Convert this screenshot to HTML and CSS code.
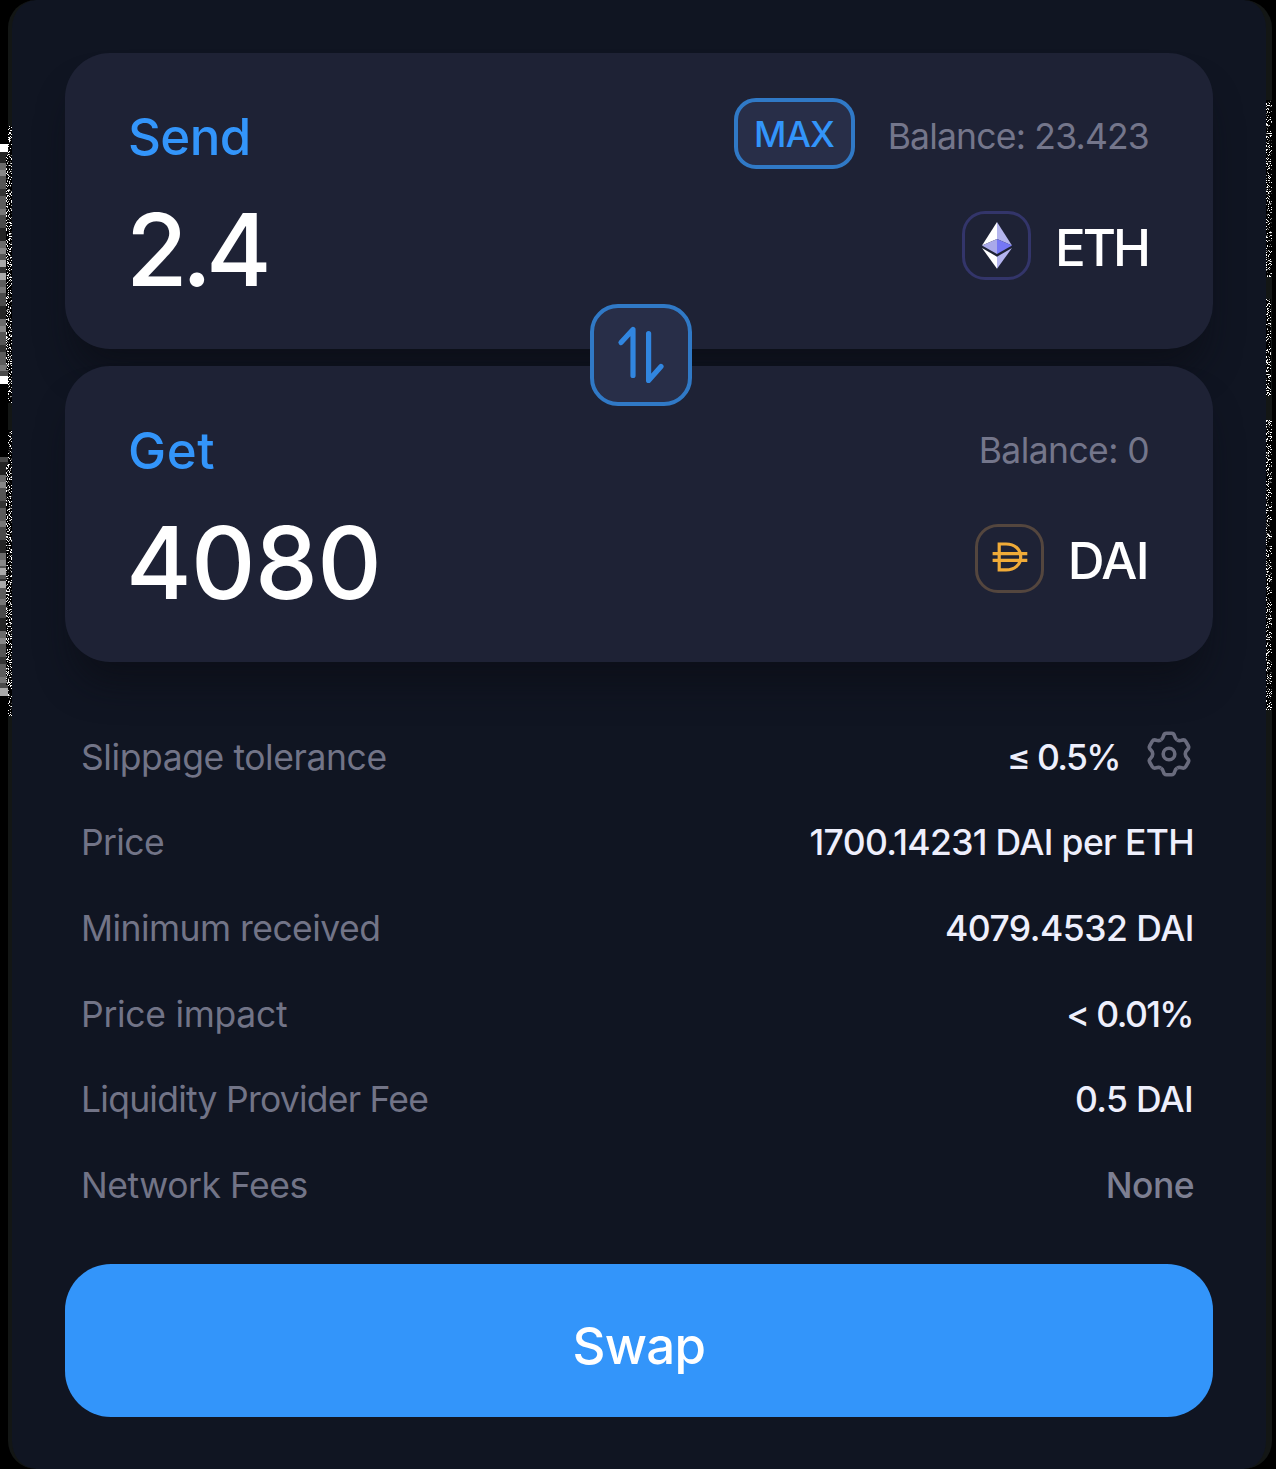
FILE: index.html
```html
<!DOCTYPE html>
<html lang="en">
<head>
<meta charset="utf-8">
<title>Swap</title>
<link rel="stylesheet" href="styles.css">
</head>
<body>
<main class="panel">
  <div class="cards">
    <section class="card">
      <div class="card-head">
        <h2 class="card-title">Send</h2>
        <div class="card-meta">
          <button class="max" type="button">MAX</button>
          <span class="balance">Balance: 23.423</span>
        </div>
      </div>
      <div class="card-body">
        <span class="amount amount-decimal">2.4</span>
        <div class="token">
          <span class="token-icon token-icon-eth">
            <svg class="eth" viewBox="0 0 30 47" aria-hidden="true">
              <path fill="#fff" d="M15 0 0 23.6 15 17Z"/>
              <path fill="#b4b5ee" d="M15 0 30 23.6 15 17Z"/>
              <path fill="#a9a9ea" d="M0 23.6 15 17V32Z"/>
              <path fill="#7577f5" d="M30 23.6 15 17V32Z"/>
              <path fill="#fff" d="M0 26 15 34.7V46.8Z"/>
              <path fill="#b4b5f0" d="M30 26 15 34.7V46.8Z"/>
            </svg>
          </span>
          <span class="token-name token-name-eth">ETH</span>
        </div>
      </div>
    </section>

    <section class="card">
      <div class="card-head">
        <h2 class="card-title card-title-get">Get</h2>
        <div class="card-meta">
          <span class="balance balance-zero">Balance: 0</span>
        </div>
      </div>
      <div class="card-body">
        <span class="amount">4080</span>
        <div class="token">
          <span class="token-icon token-icon-dai">
            <svg class="dai" viewBox="0 0 36 30" aria-hidden="true">
              <path d="M7.2 2H14C22.500 2 28.700 7 28.700 14.900S22.500 27.900 14 27.900H7.200ZM.6 11.700H35.300M.6 18.400H35.300"/>
            </svg>
          </span>
          <span class="token-name token-name-dai">DAI</span>
        </div>
      </div>
    </section>

    <button class="flip" type="button" aria-label="Switch tokens">
      <svg viewBox="0 0 102 102" aria-hidden="true">
        <path d="M31 38.500 43 25.500V71.500M58.600 29.500V76.500L71 62.500"/>
      </svg>
    </button>
  </div>

  <dl class="details">
    <div class="row">
      <dt class="t-slip">Slippage tolerance</dt>
      <dd class="with-gear">
        <span class="t-percent">≤ 0.5%</span>
        <svg class="gear" viewBox="-23 -23 46 46" aria-hidden="true">
          <defs><path id="tooth" d="M-8.100-14.100C-6.500-15-6-16-5.600-17.800C-5.200-20-4-20.800-2.500-20.800H2.500C4-20.800 5.200-20 5.600-17.800C6-16 6.500-15 8.100-14.100"/></defs>
          <use href="#tooth"/>
          <use href="#tooth" transform="rotate(60)"/>
          <use href="#tooth" transform="rotate(120)"/>
          <use href="#tooth" transform="rotate(180)"/>
          <use href="#tooth" transform="rotate(240)"/>
          <use href="#tooth" transform="rotate(300)"/>
          <circle r="5.800"/>
        </svg>
      </dd>
    </div>
    <div class="row"><dt class="t-price">Price</dt><dd class="t-rate">1700.14231 DAI per ETH</dd></div>
    <div class="row"><dt class="t-minimum">Minimum received</dt><dd class="t-received">4079.4532 DAI</dd></div>
    <div class="row"><dt class="t-impact">Price impact</dt><dd class="t-percent t-percent-end">&lt; 0.01%</dd></div>
    <div class="row"><dt class="t-provider">Liquidity Provider Fee</dt><dd class="t-fee">0.5 DAI</dd></div>
    <div class="row"><dt class="t-network">Network Fees</dt><dd class="none">None</dd></div>
  </dl>

  <button class="swap" type="button">Swap</button>
</main>

<svg class="edges" viewBox="0 0 1276 1469" aria-hidden="true">
  <defs>
    <filter id="grain" x="0" y="0" width="1" height="1" color-interpolation-filters="sRGB">
      <feTurbulence type="fractalNoise" baseFrequency="0.93" numOctaves="2" seed="7"/>
      <feColorMatrix values="16 0 0 0 -8.900  16 0 0 0 -8.900  16 0 0 0 -8.900  0 0 0 0 1"/>
    </filter>
    <pattern id="bands" width="8" height="78" y="150" patternUnits="userSpaceOnUse">
      <path fill="#242424" d="M0 0h8v13H0z"/><path fill="#6b6b6b" d="M0 13h8v7H0z"/>
      <path fill="#888" d="M0 20h8v6H0z"/><path fill="#555" d="M0 26h8v13H0z"/>
      <path fill="#333" d="M0 39h8v7H0z"/><path fill="#5c5c5c" d="M0 46h8v13H0z"/>
      <path fill="#777" d="M0 59h8v6H0z"/><path fill="#4a4a4a" d="M0 65h8v13H0z"/>
    </pattern>
  </defs>
  <path fill="url(#bands)" d="M0 152h8v224H0zM0 457h8v231H0z"/>
  <path fill="#aaa" d="M0 260h8v7H0zM0 273h8v7H0zM0 568h8v7H0zM0 581h8v7H0zM0 688h8v8H0z"/>
  <path fill="#fff" d="M0 144h8v8H0zM0 376h8v8H0z"/>
  <rect x="8" y="126" width="4" height="277" filter="url(#grain)"/>
  <rect x="6" y="155" width="2" height="215" filter="url(#grain)"/>
  <rect x="8" y="430" width="4" height="286" filter="url(#grain)"/>
  <rect x="6" y="465" width="2" height="220" filter="url(#grain)"/>
  <rect x="1266" y="100" width="6" height="174" filter="url(#grain)"/>
  <rect x="1266" y="274" width="5" height="122" filter="url(#grain)"/>
  <rect x="1266" y="420" width="6" height="290" filter="url(#grain)"/>
  <path fill="#131615" d="M1266 277h6v22h-6z"/>
</svg>
</body>
</html>
```
FILE: styles.css
```css
* { box-sizing: border-box; }

body {
  margin: 0;
  width: 1276px;
  height: 1469px;
  overflow: hidden;
  background: #000;
  color: #fff;
  font-family: Inter, "Liberation Sans", sans-serif;
  font-size: 35.5px;
  position: relative;
}

button {
  font: inherit;
  padding: 0;
  border: 0;
}

.panel {
  width: 1264px;
  height: 1469px;
  margin-left: 8px;
  padding: 53px 53px 0;
  border: solid #131615;
  border-width: 0 6px 0 4px;
  border-radius: 28px;
  background: #101522;
  display: flex;
  flex-direction: column;
}

.cards {
  position: relative;
  display: flex;
  flex-direction: column;
  gap: 18px;
  width: 1148px;
}

.card {
  height: 295.5px;
  padding: 45.5px 65px 0 63px;
  border-radius: 45px;
  background: #1e2235;
  box-shadow: 0 30px 36px -10px rgba(10, 12, 18, 0.6);
}

.card + .card { margin-top: -0.5px; }

.card-head {
  height: 70.5px;
  display: flex;
  justify-content: space-between;
  align-items: center;
}

.card-title {
  margin: 6px 0 0;
  font-size: 51px;
  font-weight: 500;
  letter-spacing: -0.6px;
  color: #3395fa;
}
.card-title-get { letter-spacing: 0.6px; margin-top: 7px; }

.card-meta {
  display: flex;
  align-items: center;
  gap: 32px;
}

.max {
  width: 121px;
  height: 71px;
  margin-right: 1px;
  padding-top: 2px;
  border: 4px solid #3079c6;
  border-radius: 22px;
  background: #282e48;
  color: #3395fa;
  font-weight: 500;
  letter-spacing: -0.7px;
}

.balance {
  margin: 6px -1px 0 0;
  color: #74768b;
  letter-spacing: -0.8px;
}
.balance-zero { letter-spacing: -0.6px; margin-top: 7px; }

.card-body {
  margin-top: 31px;
  display: flex;
  justify-content: space-between;
  align-items: center;
}

.amount {
  margin-left: -2px;
  font-size: 100px;
  line-height: 100px;
  font-weight: 500;
  letter-spacing: -0.6px;
}
.amount-decimal { letter-spacing: -5.97px; }

.token {
  margin-top: -10px;
  display: flex;
  align-items: center;
  gap: 24px;
}

.token-icon {
  width: 69px;
  height: 69px;
  border: 3px solid;
  border-radius: 23px;
  display: grid;
  place-items: center;
}
.token-icon-eth { border-color: #33356a; }
.token-icon-dai { border-color: #54463e; }

.eth { width: 30px; height: 47px; margin-left: 2px; }
.dai {
  width: 36px;
  height: 30px;
  margin: 0 0 3px 2px;
  fill: none;
  stroke: #f0ab38;
  stroke-width: 3.2;
}

.token-name {
  margin: 6px 0 0;
  font-size: 51px;
  line-height: 60px;
  font-weight: 500;
}
.token-name-eth { letter-spacing: -3px; }
.token-name-dai { letter-spacing: -1.6px; }

.flip {
  position: absolute;
  left: 525px;
  top: 251px;
  width: 102px;
  height: 102px;
  border: 4px solid #3079c6;
  border-radius: 28px;
  background: #282e48;
}
.flip svg {
  display: block;
  width: 102px;
  height: 102px;
  margin: -4px;
  fill: none;
  stroke: #3186e0;
  stroke-width: 5.2;
  stroke-linecap: round;
  stroke-linejoin: round;
}

.details {
  margin: 53px 0 0;
  width: 1148px;
  padding: 0 19px 0 16px;
}

.row {
  height: 85.67px;
  display: flex;
  justify-content: space-between;
  align-items: center;
}
.row dt { color: #727487; }
.row dd {
  margin: 0;
  color: #eeeffc;
  font-weight: 500;
}
.row .none { color: #7d7f92; letter-spacing: -0.55px; }

.with-gear {
  display: flex;
  align-items: center;
  gap: 26px;
}
.gear {
  width: 46px;
  height: 46px;
  margin: -6px 2px 0 0;
  fill: none;
  stroke: #696b7d;
  stroke-width: 3.6;
}

.t-slip { letter-spacing: -0.42px; }
.row .t-price { letter-spacing: -0.62px; }
.t-minimum { letter-spacing: -0.55px; }
.t-impact { letter-spacing: -0.29px; }
.t-provider { letter-spacing: -0.76px; }
.t-network { letter-spacing: -0.46px; }
.t-percent { letter-spacing: -1.6px; }
.row .t-percent-end { margin-right: 1px; }
.t-rate { letter-spacing: -0.66px; }
.t-received { letter-spacing: -0.5px; }
.row .t-fee { letter-spacing: -0.7px; margin-right: 1px; }

.swap {
  width: 1148px;
  height: 153px;
  margin-top: 36px;
  padding-top: 9px;
  border-radius: 46px;
  background: #3395fa;
  color: #fff;
  font-size: 51px;
  font-weight: 500;
  letter-spacing: -0.7px;
}

/* Grainy strips along both outer edges of the panel */
.edges {
  position: absolute;
  inset: 0;
  width: 1276px;
  height: 1469px;
  pointer-events: none;
}
```
